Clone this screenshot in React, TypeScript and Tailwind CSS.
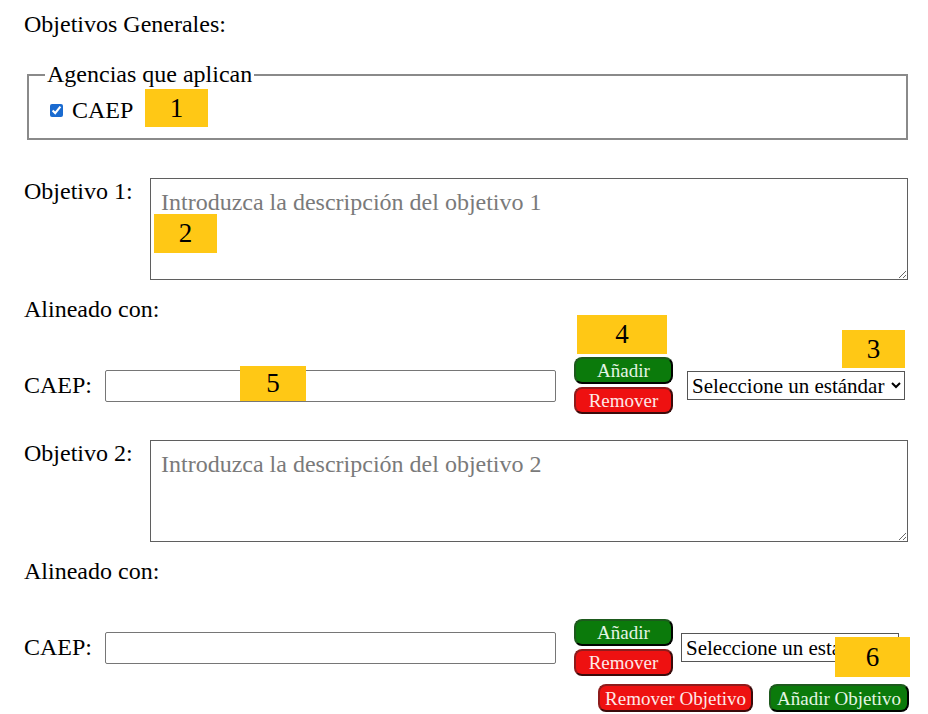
import React from 'react';

const btnGreen =
  'rounded-[8px] border-2 [border-style:outset] border-[#1d5a1d] bg-[#0b7a0b] text-[#e4f5e4] leading-none';
const btnRed =
  'rounded-[8px] border-2 [border-style:outset] border-[#8f1c1c] bg-[#ee1111] text-[#fde8e8] leading-none';

function Badge({ n, className }: { n: string; className: string }) {
  return (
    <div
      className={`absolute flex items-center justify-center bg-[#ffc815] text-[27px] text-black leading-none ${className}`}
    >
      {n}
    </div>
  );
}

function Objetivo({ num, selectGap }: { num: number; selectGap: string }) {
  return (
    <div>
      <div className="flex items-start">
        <label className="w-[126px] leading-[27px]">Objetivo {num}:</label>
        <textarea
          className="w-[758px] h-[102px] border border-[#5f5f5f] px-[10px] py-[9px] text-[24px] leading-[28px] placeholder:text-[#7a7a7a] outline-none"
          placeholder={`Introduzca la descripción del objetivo ${num}`}
        />
      </div>
      <p className="mt-[16px] leading-[27px]">Alineado con:</p>
      <div className="mt-[34px] flex items-center">
        <label className="w-[81px] leading-[27px]">CAEP:</label>
        <input
          type="text"
          className="w-[451px] h-[32px] rounded-[2px] border border-[#767676] bg-white outline-none"
        />
        <div className="ml-[18px] flex flex-col gap-[3px]">
          <button className={`${btnGreen} w-[99px] h-[27px] text-[19px]`}>Añadir</button>
          <button className={`${btnRed} w-[99px] h-[27px] text-[19px]`}>Remover</button>
        </div>
        <select
          className={`${selectGap} w-[218px] h-[29px] border border-[#555] bg-white text-[21px] leading-none rounded-none`}
          defaultValue=""
        >
          <option value="">Seleccione un estándar</option>
        </select>
      </div>
    </div>
  );
}

export default function App() {
  return (
    <div className="relative w-[928px] h-[714px] overflow-hidden bg-white pl-6 pt-[11px] text-[24px] text-black font-['Liberation_Serif',serif]">
      <p className="leading-[27px]">Objetivos Generales:</p>

      <fieldset className="ml-[3px] mt-[23px] w-[881px] border-2 border-[#8a8a8a] pl-[16px] pb-[14px]">
        <legend className="px-[2px] leading-[27px]">Agencias que aplican</legend>
        <div className="mt-[9px] flex items-center">
          <input type="checkbox" defaultChecked className="ml-[5px] w-[13px] h-[13px] accent-[#1a6bd0]" />
          <span className="ml-[9px] leading-[27px]">CAEP</span>
        </div>
      </fieldset>

      <div className="mt-[38px]">
        <Objetivo num={1} selectGap="ml-[14px]" />
      </div>
      <div className="mt-[26px]">
        <Objetivo num={2} selectGap="ml-[8px]" />
      </div>

      <div className="mt-[8px] flex justify-end gap-[16px] pr-[19px]">
        <button className={`${btnRed} w-[155px] h-[28px] text-[19px]`}>Remover Objetivo</button>
        <button className={`${btnGreen} w-[140px] h-[28px] text-[19px]`}>Añadir Objetivo</button>
      </div>

      <Badge n="1" className="left-[145px] top-[89px] w-[63px] h-[38px]" />
      <Badge n="2" className="left-[154px] top-[214px] w-[63px] h-[39px]" />
      <Badge n="3" className="left-[842px] top-[330px] w-[63px] h-[38px]" />
      <Badge n="4" className="left-[577px] top-[315px] w-[90px] h-[39px]" />
      <Badge n="5" className="left-[240px] top-[366px] w-[66px] h-[35px]" />
      <Badge n="6" className="left-[835px] top-[637px] w-[75px] h-[40px]" />
    </div>
  );
}
